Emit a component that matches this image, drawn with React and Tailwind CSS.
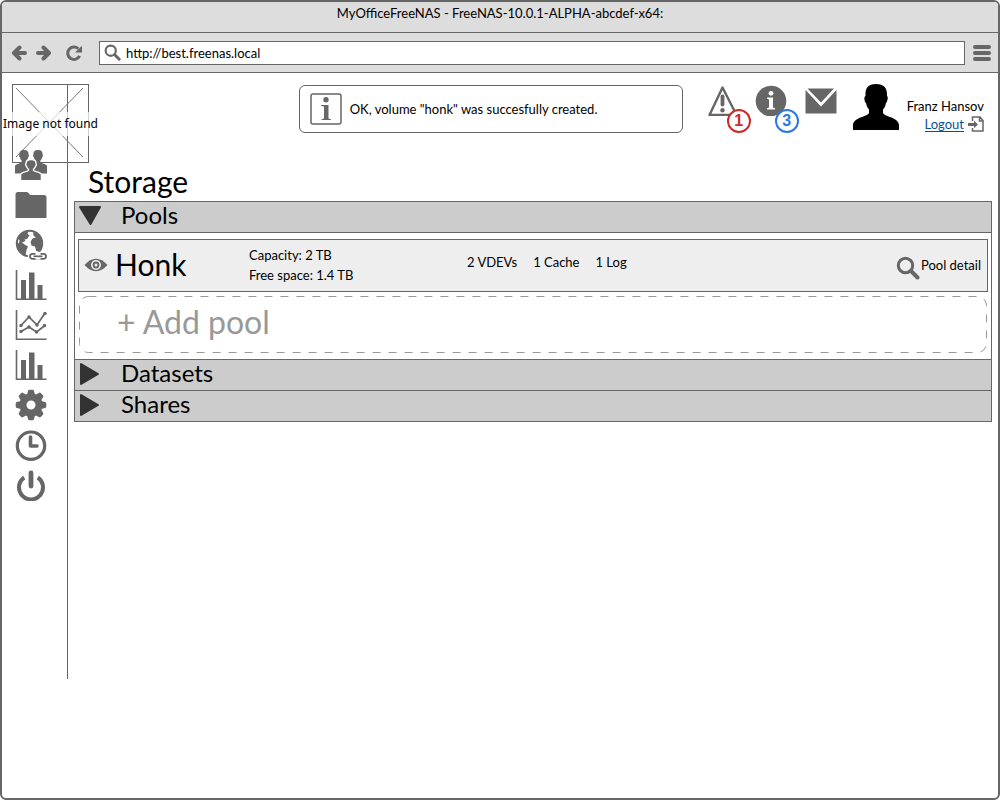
import React, { useState } from "react";

function Svg({ children, box = "0 0 32 32", className = "size-8", ...rest }) {
  return (
    <svg viewBox={box} className={`block shrink-0 ${className}`} fill="#666" stroke="none" aria-hidden="true" {...rest}>
      {children}
    </svg>
  );
}

function SearchIcon({ className }) {
  return (
    <Svg box="0 0 24 24" className={className}>
      <circle cx="9.5" cy="9.5" r="7.2" fill="none" stroke="#666" strokeWidth="3" />
      <path d="M15 15l6.5 6.5" stroke="#666" strokeWidth="4" strokeLinecap="round" />
    </Svg>
  );
}

const ArrowLeft = () => (
  <Svg box="0 0 16 16" className="size-4">
    <path d="M8.5 2.500L3 8l5.500 5.500M3.500 8H14" fill="none" stroke="#666" strokeWidth="4" strokeLinejoin="round" strokeLinecap="round" />
  </Svg>
);

const ArrowRight = () => (
  <Svg box="0 0 16 16" className="size-4">
    <path d="M7.500 2.500L13 8l-5.500 5.500M12.500 8H2" fill="none" stroke="#666" strokeWidth="4" strokeLinejoin="round" strokeLinecap="round" />
  </Svg>
);

const Reload = () => (
  <Svg box="0 0 16 16" className="size-4">
    <path d="M12.300 3.800A6.200 6.200 0 1 0 13.600 10.800" fill="none" stroke="#666" strokeWidth="3" />
    <path d="M16 .8V7.500H9z" />
  </Svg>
);

const person =
  "M-4.600 4C-4.600 1-3 0 0 0s4.600 1 4.600 4c.6.4.3 2-.4 2.400-.4 1.400-1 2.300-1.900 3v1.200c1.200 1.200 6.500 1.400 7.200 4V20.500H-9.500V14.600c.7-2.600 6-2.800 7.200-4V9.400c-.9-.7-1.500-1.600-1.900-3-.7-.4-1-2-.4-2.400z";

const Users = () => (
  <Svg>
    <path transform="translate(9 1) scale(1 1.150)" d={person} />
    <path transform="translate(23 1) scale(1 1.150)" d={person} />
    <path transform="translate(16 10.500) scale(1.100 1.030)" d={person} stroke="#fff" strokeWidth="1.300" />
  </Svg>
);

const Folder = () => (
  <Svg>
    <path d="M.5 29V5.500Q.5 3 3 3h8.500q2 0 2.500 1.500T16.500 6H29q2.500 0 2.500 2.500V29z" />
  </Svg>
);

const Globe = () => (
  <Svg>
    <circle cx="14.500" cy="14.500" r="12.700" fill="#fff" stroke="#666" strokeWidth="2" />
    <path d="M3 9C5 5 9 2.500 13.500 2.500l-1 2.500 2 1.500-2.500 3.500-2.500.5 1 1.500-3.500 1.500 2.500 2 3.500 2-1.500 3.500-1 5C5 24 1.500 18.500 2 13.500l2 1 .5-3z" />
    <path d="M18 3c5 1.500 8 5 9 10l-1 6-2.500 4-2.500-1.500-1-4-3.500-1-1-3.500 2-3.500 3.500-1-2.500-2z" />
    <rect x="14" y="24" width="17" height="7" rx="3.500" fill="#fff" stroke="#fff" strokeWidth="2.500" />
    <rect x="15" y="24.800" width="9" height="5" rx="2.500" fill="none" stroke="#666" strokeWidth="1.800" />
    <rect x="22" y="24.800" width="9" height="5" rx="2.500" fill="none" stroke="#666" strokeWidth="1.800" />
    <rect x="20.500" y="24" width="5" height="6.600" fill="#fff" />
    <path d="M18.500 27.300h9" stroke="#666" strokeWidth="1.700" />
  </Svg>
);

const Bars = () => (
  <Svg>
    <path d="M.7 1h1.600v28.500H31.500V31H.7zM6 11h5v18.500H6zM14 3.500h5.500v26H14zM22.500 16h5v13.500h-5z" />
  </Svg>
);

const Lines = () => (
  <Svg>
    <path d="M.7 1h1.600v28.500H31.500V31H.7z" />
    <path d="M6 16.500l8-8.500 8 8 8-12M6 22.500l8-4.500 7.500 5L30 16.500" fill="none" stroke="#666" strokeWidth="1.700" />
    {[[6, 16.500], [14, 8], [22, 16], [30, 4.500], [6, 22.500], [14, 18], [21.500, 23], [29.500, 16.500]].map(([x, y]) => (
      <circle key={`${x}-${y}`} cx={x} cy={y} r="1.700" />
    ))}
  </Svg>
);

const Gear = () => (
  <Svg>
    <circle cx="16" cy="16" r="8" fill="none" stroke="#666" strokeWidth="7" />
    {[0, 45, 90, 135, 180, 225, 270, 315].map((a) => (
      <path key={a} transform={`rotate(${a} 16 16)`} d="M11.800 6.500L13 2Q13.200.7 14.500.7h3Q18.800.7 19 2l1.200 4.500z" />
    ))}
  </Svg>
);

const Clock = () => (
  <Svg>
    <circle cx="16" cy="16.700" r="13.700" fill="none" stroke="#666" strokeWidth="3.200" />
    <path d="M15.500 8v9H22" fill="none" stroke="#666" strokeWidth="3.600" strokeLinecap="round" strokeLinejoin="round" />
  </Svg>
);

const Power = () => (
  <Svg>
    <path d="M9.200 8.500A12 12 0 1 0 22.800 8.500" fill="none" stroke="#666" strokeWidth="4" />
    <path d="M16 4v13" stroke="#666" strokeWidth="4.800" strokeLinecap="round" />
  </Svg>
);

const nav = [
  ["Users", Users],
  ["Files", Folder],
  ["Network", Globe],
  ["Usage", Bars],
  ["Trends", Lines],
  ["Reports", Bars],
  ["Settings", Gear],
  ["History", Clock],
  ["Power", Power],
];

function MissingImage() {
  return (
    <div className="flex h-[79px] w-[77px] items-center justify-center border border-[#666]">
      <svg viewBox="0 0 77 79" className="absolute inset-0 size-full" stroke="#777" aria-hidden="true">
        <path d="M4 4L71 73M71 4L4 73" />
      </svg>
      <span className="relative whitespace-nowrap bg-white/70 px-1 font-['Noto_Sans',sans-serif] text-xs leading-6">Image not found</span>
    </div>
  );
}

function Badge({ children, className }) {
  return (
    <span
      className={`absolute -right-3 top-[25px] flex size-6 items-center justify-center rounded-full border-2 bg-white font-['Liberation_Sans',sans-serif] text-base font-bold ${className}`}
    >
      {children}
    </span>
  );
}

function SectionHeader({ title, open, onToggle }) {
  return (
    <h2>
      <button type="button" onClick={onToggle} aria-expanded={open} className="flex h-[30px] w-full items-center bg-[#ccc] pb-[3px] text-left text-2xl leading-7">
        <Svg box="0 0 24 24" className="mx-1 size-6">
          {open ? (
            <path d="M1 3h20L11.500 20z" fill="#333" stroke="#333" strokeLinejoin="round" strokeWidth="2" />
          ) : (
            <path d="M2 2v20l17-10z" fill="#333" stroke="#333" strokeLinejoin="round" strokeWidth="2" />
          )}
        </Svg>
        <span className="pb-[2px] pl-[14px]">{title}</span>
      </button>
    </h2>
  );
}

export default function App() {
  const [open, setOpen] = useState({ Pools: true, Datasets: false, Shares: false });
  const toggle = (k) => setOpen((o) => ({ ...o, [k]: !o[k] }));
  return (
    <div className="flex min-h-screen flex-col overflow-hidden rounded-md border-2 border-[#666] bg-white font-['Lato',sans-serif] text-[13px] leading-5 text-black">
      <div className="h-[31px] border-b border-[#666] bg-[#ddd] pt-px text-center">MyOfficeFreeNAS - FreeNAS-10.0.1-ALPHA-abcdef-x64:</div>
      <div className="flex h-10 items-center border-b border-[#666] bg-[#ddd] pl-[9px] pr-[7px]">
        <button type="button" aria-label="Back"><ArrowLeft /></button>
        <button type="button" aria-label="Forward" className="ml-[9px]"><ArrowRight /></button>
        <button type="button" aria-label="Reload" className="ml-[14px]"><Reload /></button>
        <label className="ml-[17px] flex h-6 flex-1 items-center border border-[#666] bg-white pl-1">
          <SearchIcon className="size-[17px]" />
          <input aria-label="Address" defaultValue="http://best.freenas.local" className="ml-[5px] min-w-0 flex-1 outline-none" />
        </label>
        <button type="button" aria-label="Menu" className="ml-2">
          <Svg box="0 0 18 18" className="size-[18px]">
            <path d="M2 3h14M2 9h14M2 15h14" stroke="#666" strokeWidth="4" strokeLinecap="round" />
          </Svg>
        </button>
      </div>

      <div className="flex flex-1 items-start pt-[11px]">
        <aside className="relative w-[66px] shrink-0 border-r border-[#666] pb-[178px]">
          <div className="absolute left-[10px] top-0"><MissingImage /></div>
          <nav className="relative flex flex-col gap-2 pl-[13px] pt-[65px]">
            {nav.map(([name, Icon]) => (
              <a key={name} href={`#${name.toLowerCase()}`} aria-label={name} className="w-8"><Icon /></a>
            ))}
          </nav>
        </aside>

        <main className="min-w-0 flex-1 px-[6px]">
          <header className="flex items-start pr-2">
            <div className="flex flex-1 justify-end">
              <div role="status" className="mt-px flex h-12 w-[384px] items-center rounded-md border border-[#666] pl-[10px]">
                <Svg>
                  <rect x="1" y="1" width="30" height="30" rx="2" fill="#fff" stroke="#666" strokeWidth="1.500" />
                  <circle cx="16" cy="6.800" r="2.700" />
                  <path d="M11 12h7.500v13.500l2.500.7V27H11.500v-.8l2.500-.7v-12l-3-.7z" />
                </Svg>
                <span className="ml-2">OK, volume "honk" was succesfully created.</span>
              </div>
            </div>
            <button type="button" aria-label="1 warning" className="relative ml-6">
              <Svg>
                <path d="M15.500 3.500L2.500 31h27z" fill="none" stroke="#666" strokeWidth="2.400" strokeLinejoin="round" />
                <path d="M15.500 12.500v8" stroke="#666" strokeWidth="3.800" strokeLinecap="round" />
                <circle cx="15.500" cy="26.300" r="2.200" />
              </Svg>
              <Badge className="border-[#cc2b2b] text-[#cc2b2b]">1</Badge>
            </button>
            <button type="button" aria-label="3 messages" className="relative ml-4">
              <Svg>
                <circle cx="16" cy="17" r="15.300" />
                <circle cx="16" cy="9.300" r="2.400" fill="#fff" />
                <path d="M12 13.500h6v10l2 .8V25.500h-8v-1.200l2-.8v-8l-2-.8z" fill="#fff" />
              </Svg>
              <Badge className="border-[#2b78e4] text-[#2b78e4]">3</Badge>
            </button>
            <button type="button" aria-label="Mail" className="ml-[18px]">
              <Svg>
                <path d="M2.500 4.500h26.500L16 18.500zM.5 6L16 22.500 31.500 6v23.500H.5z" />
              </Svg>
            </button>
            <Svg box="0 0 46 46" className="ml-4 size-[46px]">
              <path d="M12.500 12C12 4 15 0 23 0s11.500 4 11 12c1.500.5.5 6-1 7-.5 3-1.500 5-3 6.500v3.500c2 4 15 4 16 12v5H0v-5c1-8 14-8 16-12v-3.500c-1.500-1.500-2.500-3.500-3-6.500-1.500-1-2.500-6.500-.5-7z" fill="#000" />
            </Svg>
            <div className="ml-2 flex flex-col items-end pt-3">
              <span>Franz Hansov</span>
              <a href="#logout" className="flex h-4 items-center gap-1 text-[#0b4f94]">
                <span className="border-b border-[#0b4f94] leading-[14px]">Logout</span>
                <Svg box="0 0 16 16" className="size-4">
                  <path d="M4.500 5V1H12l3 3.500V15H4.500v-3M11.500 1v4H15" fill="none" stroke="#666" strokeWidth="1.500" />
                  <path d="M0 8.500h7" stroke="#666" strokeWidth="3" />
                  <path d="M6 4.800L10 8.500 6 12.200z" />
                </Svg>
              </a>
            </div>
          </header>

          <h1 className="ml-[14px] mt-8 text-3xl leading-8">Storage</h1>
          <div className="mt-1 divide-y divide-[#666] border border-[#666]">
            <SectionHeader title="Pools" open={open.Pools} onToggle={() => toggle("Pools")} />
            {open.Pools && (
              <div className="px-[3px] py-[6px]">
                <div className="flex h-[53px] items-center border border-[#666] bg-[#eee] pb-[2px] pl-[5px] pr-[6px]">
                  <Svg box="0 0 24 16" className="h-4 w-6">
                    <path d="M.5 8Q12-4.500 23.500 8 12 20.500.5 8z" />
                    <circle cx="12" cy="8" r="4.200" fill="none" stroke="#eee" strokeWidth="1.600" />
                    <circle cx="12" cy="8" r="1.500" fill="#eee" />
                  </Svg>
                  <span className="ml-[7px] w-[134px] pb-[2px] text-3xl leading-8">Honk</span>
                  <div className="w-[218px]">
                    <p>Capacity: 2 TB</p>
                    <p>Free space: 1.4 TB</p>
                  </div>
                  <ul className="flex flex-1 gap-4 pb-[6px]">
                    <li>2 VDEVs</li>
                    <li>1 Cache</li>
                    <li>1 Log</li>
                  </ul>
                  <a href="#pool-detail" className="flex items-center">
                    <SearchIcon className="mt-[6px] size-6" />
                    <span className="ml-px">Pool detail</span>
                  </a>
                </div>
                <div className="mt-1 px-px">
                  <button type="button" className="relative block h-[57px] w-full pb-[6px] pl-[38px] text-left text-[32px] leading-8 text-[#999]">
                    <svg className="absolute left-0 top-0 h-[calc(100%-1px)] w-[calc(100%-1px)] overflow-visible" aria-hidden="true">
                      <rect x=".5" y=".5" width="100%" height="100%" rx="9" fill="none" stroke="#999" strokeDasharray="8 8" />
                    </svg>
                    + Add pool
                  </button>
                </div>
              </div>
            )}
            <SectionHeader title="Datasets" open={open.Datasets} onToggle={() => toggle("Datasets")} />
            <SectionHeader title="Shares" open={open.Shares} onToggle={() => toggle("Shares")} />
          </div>
        </main>
      </div>
    </div>
  );
}
